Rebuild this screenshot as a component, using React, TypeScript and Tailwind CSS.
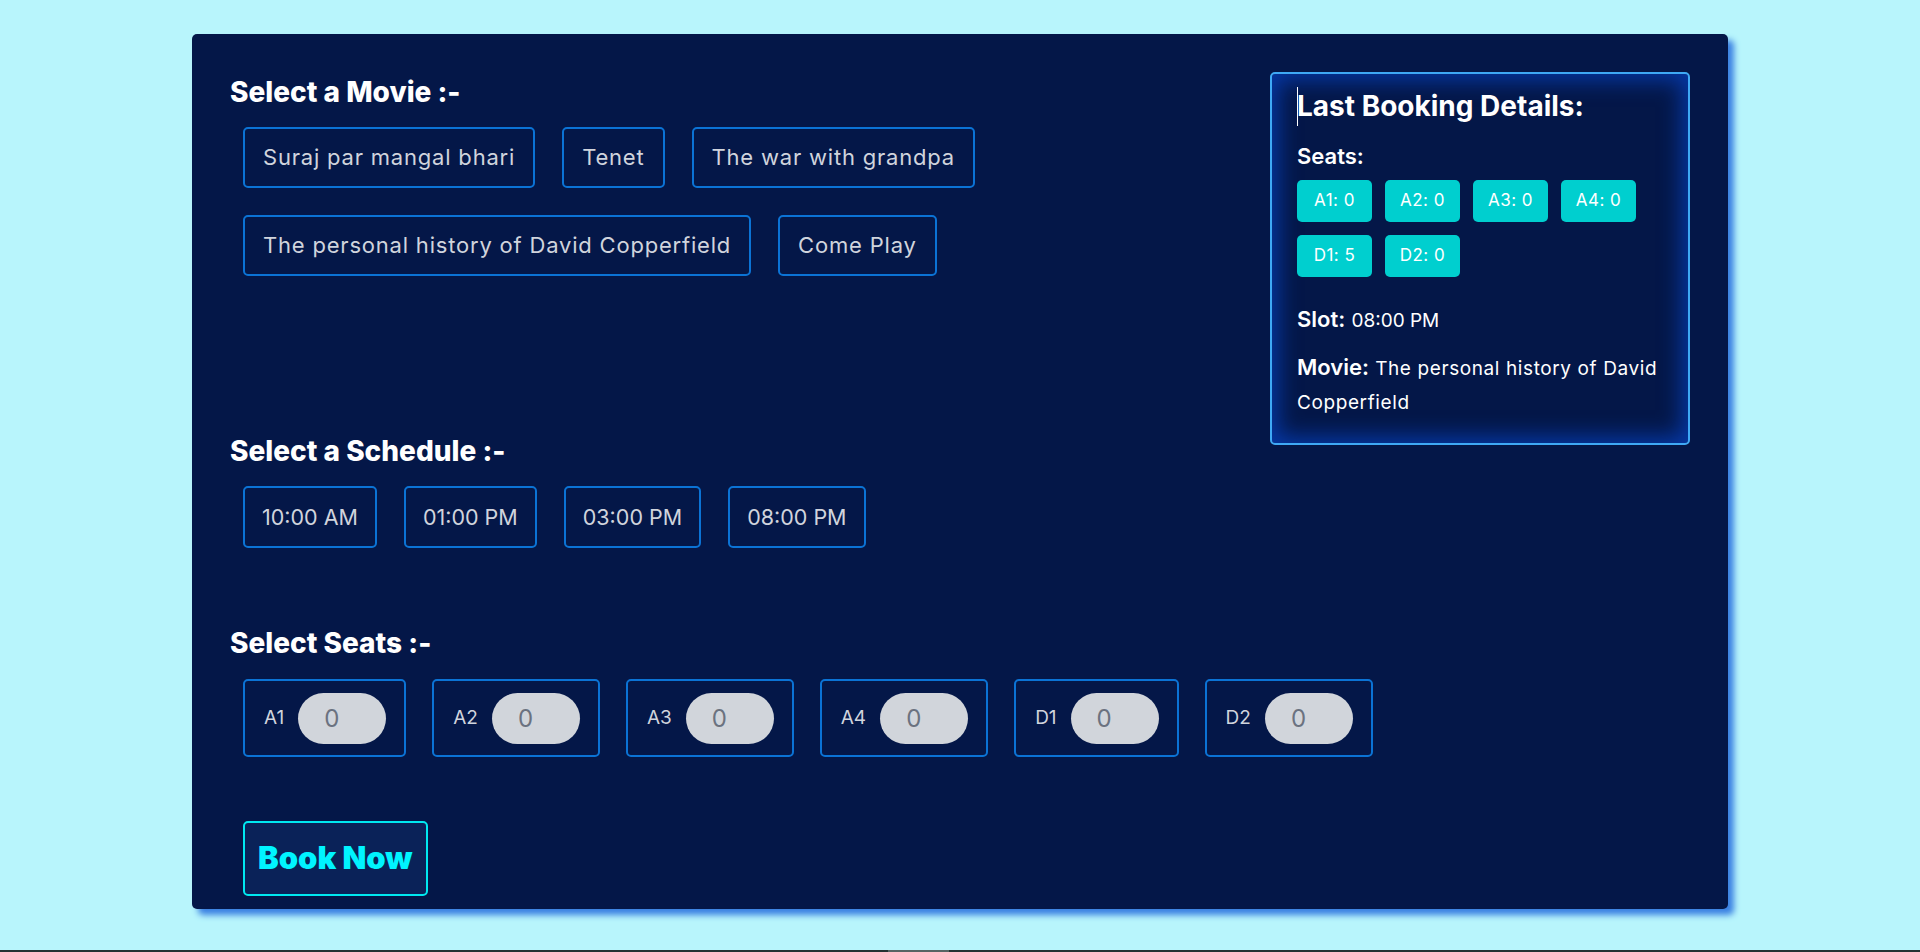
import { useState } from 'react'

const MOVIES = [
  'Suraj par mangal bhari',
  'Tenet',
  'The war with grandpa',
  'The personal history of David Copperfield',
  'Come Play',
]
const SLOTS = ['10:00 AM', '01:00 PM', '03:00 PM', '08:00 PM']
const SEATS = ['A1', 'A2', 'A3', 'A4', 'D1', 'D2']

const lastBooking = {
  seats: { A1: 0, A2: 0, A3: 0, A4: 0, D1: 5, D2: 0 } as Record<string, number>,
  slot: '08:00 PM',
  movie: 'The personal history of David Copperfield',
}

function Heading({ children, className = '' }: { children: React.ReactNode; className?: string }) {
  return (
    <h2 className={`text-[28px] leading-[36px] font-extrabold text-white ${className}`}>
      {children}
    </h2>
  )
}

export default function App() {
  const [counts, setCounts] = useState<Record<string, string>>(
    Object.fromEntries(SEATS.map((s) => [s, '0']))
  )

  return (
    <div className="h-[952px] flex flex-col bg-[#b8f5fc] font-['Inter',sans-serif]">
      <div className="flex-1">
        <div className="w-[80%] mx-auto mt-[34px] bg-[#041748] rounded-[5px] shadow-[6px_6px_6px_#3a80e2] px-[38px] pt-[38px] pb-[13px] flex">
          {/* booking form */}
          <div className="flex-1 min-w-0">
            <Heading className="mt-[2px]">Select a Movie :-</Heading>
            <div className="flex flex-wrap gap-[27px] pl-[13px] mt-[17px] h-[149px] content-start">
              {MOVIES.map((m) => (
                <button
                  key={m}
                  className="h-[61px] px-[18px] border-2 border-[#0b73d5] rounded-[5px] text-[22px] tracking-[0.8px] text-[#d0d4dd]"
                >
                  {m}
                </button>
              ))}
            </div>

            <Heading className="mt-[157px]">Select a Schedule :-</Heading>
            <div className="flex gap-[27px] pl-[13px] mt-[17px]">
              {SLOTS.map((s) => (
                <button
                  key={s}
                  className="h-[62px] px-[17px] border-2 border-[#0b73d5] rounded-[5px] text-[21.5px] text-[#d0d4dd]"
                >
                  {s}
                </button>
              ))}
            </div>

            <Heading className="mt-[77px]">Select Seats :-</Heading>
            <div className="flex gap-[26px] pl-[13px] mt-[18px]">
              {SEATS.map((s) => (
                <div
                  key={s}
                  className="shrink-0 h-[78px] pl-[19px] pr-[18px] border-2 border-[#0b73d5] rounded-[5px] flex items-center gap-[14px]"
                >
                  <span className="text-[19px] text-[#d0d4dd]">{s}</span>
                  <input
                    type="text"
                    inputMode="numeric"
                    value={counts[s]}
                    onChange={(e) => setCounts({ ...counts, [s]: e.target.value })}
                    className="w-[88px] h-[51px] rounded-full bg-[#d1d5db] pl-[26px] text-[24px] text-[#6b7280] outline-none"
                  />
                </div>
              ))}
            </div>

            <button className="mt-[64px] ml-[13px] h-[75px] px-[13px] border-2 border-[#00e8f0] rounded-[5px] bg-[#0a2258] text-[31px] font-black text-[#00f4ff]">
              Book Now
            </button>
          </div>

          {/* last booking */}
          <div className="w-[420px] shrink-0 self-start border-2 border-[#3fa9f5] rounded-[5px] shadow-[inset_0_0_22px_6px_#0638a6] px-[25px] pt-[14px] pb-[24px] text-white">
            <h3 className="relative text-[28px] leading-[36px] font-bold">
              <span className="absolute left-0 top-[-1px] w-px h-[39px] bg-white" />
              Last Booking Details:
            </h3>
            <p className="mt-[17px] text-[22px] leading-[30px] font-semibold">Seats:</p>
            <div className="mt-[9px] flex flex-wrap gap-[13px] w-[340px]">
              {Object.entries(lastBooking.seats).map(([k, v]) => (
                <span
                  key={k}
                  className="w-[75px] h-[42px] rounded-[5px] bg-[#00cfcf] flex items-center justify-center text-[17px] tracking-[0.5px] text-white"
                >
                  {k}: {v}
                </span>
              ))}
            </div>
            <p className="mt-[27px] text-[22px] leading-[30px]">
              <span className="font-semibold">Slot:</span>{' '}
              <span className="text-[19px]">{lastBooking.slot}</span>
            </p>
            <p className="mt-[15px] text-[22px] leading-[32px]">
              <span className="font-semibold">Movie:</span>{' '}
              <span className="text-[19px] tracking-[0.6px]">{lastBooking.movie}</span>
            </p>
          </div>
        </div>
      </div>

      {/* scroll strip */}
      <div className="h-[2px] bg-[#243232] flex">
        <div className="ml-[888px] w-[61px] bg-[#566464]" />
      </div>
    </div>
  )
}
